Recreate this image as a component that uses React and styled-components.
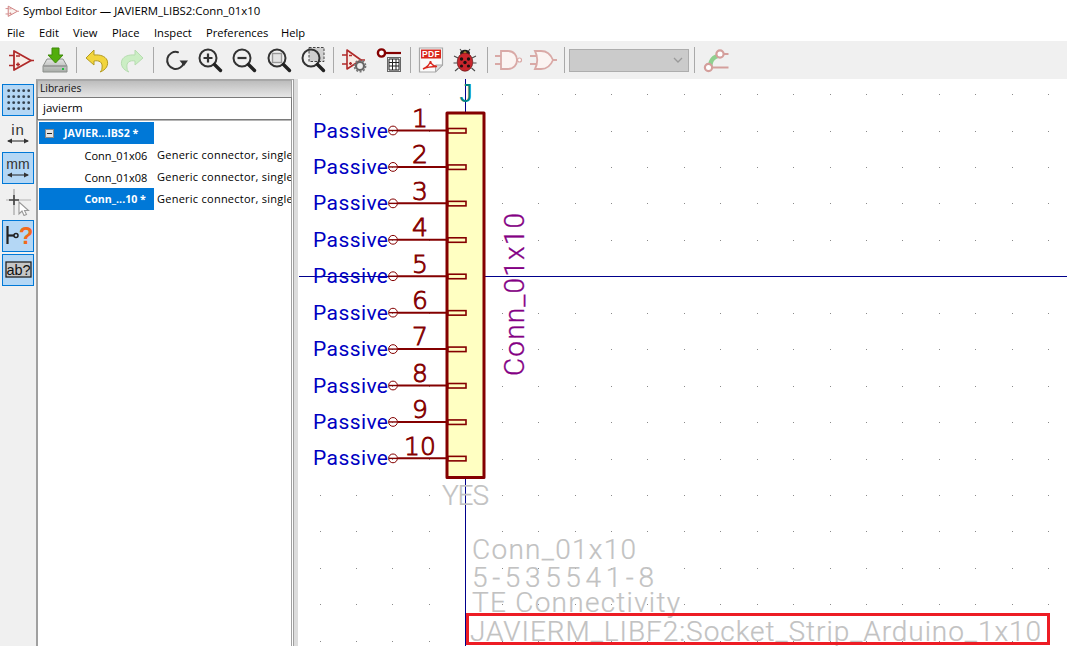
import React from 'react';
import styled, { createGlobalStyle } from 'styled-components';

const Global = createGlobalStyle`
  html, body { margin: 0; padding: 0; background: #fff; overflow: hidden; }
  #root { width: 1067px; height: 646px; }
`;
const UI = `"Open Sans", "Noto Sans", sans-serif`;

const Page = styled.div`display:flex;flex-direction:column;width:1067px;height:646px;overflow:hidden;background:#fff;font-family:${UI};color:#000;`;
const TitleBar = styled.div`display:flex;align-items:center;gap:4px;height:22px;padding:0 0 1px 5px;box-sizing:border-box;font-size:11.4px;background:#fff;`;
const MenuBar = styled.div`display:flex;align-items:center;height:19px;padding:1px 0 0 7px;box-sizing:border-box;font-size:11.2px;background:#fff;`;
const MenuItem = styled.span`width:${p => p.$w}px;`;
const Toolbar = styled.div`display:flex;align-items:center;height:38px;padding-left:4px;background:#f0f0f0;`;
const Slot = styled.div`display:flex;align-items:center;justify-content:center;width:34.3px;height:26px;flex:none;`;
const Sep = styled.div`width:${p => p.$w}px;flex:none;display:flex;justify-content:center;&::before{content:"";width:1px;height:26px;background:#a9a9a9;}`;
const Select = styled.div`display:flex;align-items:center;justify-content:flex-end;width:120px;height:23px;box-sizing:border-box;border:1px solid #adadad;background:#cbcbcb;padding-right:4px;flex:none;`;
const Body = styled.div`display:flex;flex:1;min-height:0;`;
const Rail = styled.div`display:flex;flex-direction:column;gap:2px;width:36px;flex:none;box-sizing:border-box;padding:5px 2px 0;background:#f0f0f0;`;
const RailButton = styled.div`display:flex;align-items:center;justify-content:center;width:32px;height:32px;box-sizing:border-box;border:1px solid ${p => p.$on ? '#0078d7' : 'transparent'};background:${p => p.$on ? '#b4d7f5' : 'transparent'};`;
const Panel = styled.div`display:flex;flex-direction:column;width:258px;flex:none;box-sizing:border-box;border-left:2px solid #a0a0a0;border-top:2px solid #a8a8a8;border-right:3px double #a0a0a0;background:#fff;`;
const PanelHead = styled.div`height:16px;line-height:14px;padding-left:2px;font-size:10.2px;background:linear-gradient(#bdbdbd,#e6e6e6);color:#111;`;
const Search = styled.div`height:23px;box-sizing:border-box;border:1px solid #7a7a7a;margin:0 -1px;padding-left:5px;line-height:20px;font-size:11.5px;background:#fff;`;
const Tree = styled.div`flex:1;border-top:1px solid #b5b5b5;padding:1px 0 0 1px;`;
const Row = styled.div`display:grid;grid-template-columns:115px 1fr;height:22px;line-height:21px;font-size:11px;white-space:nowrap;`;
const Name = styled.div`display:flex;align-items:center;padding-left:${p => p.$lib ? 6 : 45.5}px;gap:10px;overflow:hidden;background:${p => p.$on ? '#0078d7' : 'transparent'};color:${p => p.$on ? '#fff' : '#000'};font-weight:${p => p.$on ? 700 : 400};font-size:${p => p.$on ? 10.6 : 11}px;`;
const Desc = styled.div`padding-left:3px;overflow:hidden;letter-spacing:.25px;`;
const Minus = styled.span`display:flex;align-items:center;justify-content:center;width:9px;height:9px;box-sizing:border-box;background:#e4e4e4;border:1px solid #8a8a8a;flex:none;&::before{content:"";width:5px;height:1px;background:#222;}`;
const Sash = styled.div`width:4px;flex:none;background:#dcdcdc;`;
const Canvas = styled.svg`flex:1;display:block;width:769px;height:567px;background:#fff;`;

const PinName = styled.text`font-family:Roboto,sans-serif;font-size:21px;fill:#0000c2;`;
const PinNum = styled.text`font-family:"DejaVu Sans",sans-serif;font-weight:200;font-size:25px;fill:#840000;stroke:#840000;stroke-width:.9px;text-anchor:middle;`;
const Ghost = styled.text`font-family:Roboto,sans-serif;font-weight:300;font-size:28px;fill:#c2c2c2;stroke:#c2c2c2;stroke-width:.2px;`;
const Value = styled.text`font-family:Roboto,sans-serif;font-weight:300;font-size:28px;fill:#840084;stroke:#840084;stroke-width:.3px;`;
const RefDes = styled.text`font-family:"Liberation Sans",sans-serif;font-size:26px;fill:#008484;`;
const RailText = styled.text`font-family:"Liberation Sans",sans-serif;font-size:${p => p.$s || 14}px;font-weight:${p => p.$b ? 700 : 400};letter-spacing:${p => p.$ls || 0}px;fill:${p => p.$c || '#333'};text-anchor:middle;`;
const PdfText = styled.text`font-family:"Liberation Sans",sans-serif;font-weight:700;font-size:8.5px;fill:#fff;text-anchor:middle;letter-spacing:.3px;`;

const Ico = ({ w = 26, h = 26, children }) => <svg width={w} height={h} viewBox={`0 0 ${w} ${h}`}>{children}</svg>;

const Amp = ({ size = 26, faded }) => (
  <svg width={size} height={size} viewBox="0 0 26 26" opacity={faded ? 0.6 : 1}>
    <path d="M6 4V23L23 13.5Z" fill="#f8ece6" stroke="#b02a2a" strokeWidth="1.8" strokeLinejoin="round" />
    <path d="M1 8.5H6M1 18.5H6M23 13.5H26" stroke="#b02a2a" strokeWidth="1.6" />
    <path d="M8 9H12" stroke="#b02a2a" strokeWidth="1.5" />
    <path d="M8 17.5H12M10 15.5V19.5" stroke="#b02a2a" strokeWidth="1.5" />
  </svg>
);
const Drive = () => (
  <Ico w={28}>
    <defs>
      <linearGradient id="dg" x1="0" y1="0" x2="0" y2="1"><stop offset="0" stopColor="#e4e4e4" /><stop offset="1" stopColor="#a8aca8" /></linearGradient>
    </defs>
    <path d="M6 12H22L26 19V25H2V19Z" fill="url(#dg)" stroke="#8c908c" strokeWidth="1" />
    <path d="M2.5 19H25.5" stroke="#777" strokeWidth="1" />
    <rect x="21" y="21" width="2" height="2" fill="#22c042" />
    <path d="M11 1H18V8H22L14.5 16L7 8H11Z" fill="#52ad0c" stroke="#3f8a0a" strokeWidth="1" />
  </Ico>
);
const Arrow = ({ fill, stroke, flip, op = 1 }) => (
  <Ico>
    <g transform={flip ? 'translate(26,0) scale(-1,1)' : undefined} opacity={op}>
      <path d="M10 3L2 11L10 18V14C15 13 19 15 18 21C18 23 17 24 16 25C22 23 25 18 23 13C21 9 16 7.5 10 8Z" fill={fill} stroke={stroke} strokeWidth="1" strokeLinejoin="round" />
    </g>
  </Ico>
);
const Refresh = () => (
  <Ico>
    <path d="M21 15A8.5 8.5 0 1 1 15 5.2" fill="none" stroke="#333" strokeWidth="2" strokeLinecap="round" />
    <path d="M16.5 13.5H25L21 19Z" fill="#333" />
  </Ico>
);
const Lens = ({ children }) => (
  <Ico>
    {children}
    <circle cx="11" cy="11" r="8.5" fill="none" stroke="#333" strokeWidth="2" />
    <path d="M17.5 17.5L23.5 23.5" stroke="#222" strokeWidth="3.4" strokeLinecap="round" />
  </Ico>
);
const Gear = ({ x, y }) => (
  <g transform={`translate(${x} ${y})`}>
    <circle r="4" fill="#eee" stroke="#666" strokeWidth="2.2" />
    <circle r="5.6" fill="none" stroke="#777" strokeWidth="1.6" strokeDasharray="2 1.5" />
  </g>
);
const AmpGear = () => (
  <Ico>
    <path d="M5 3V22L19 13Z" fill="#f8ece6" stroke="#b02a2a" strokeWidth="1.6" strokeLinejoin="round" />
    <path d="M0 8H5M0 17H5M19 13H23" stroke="#b02a2a" strokeWidth="1.5" />
    <path d="M7 8.5H10M7 16.5H10M8.5 15V18" stroke="#b02a2a" strokeWidth="1.3" />
    <Gear x={18} y={19} />
  </Ico>
);
const PinTable = () => (
  <Ico>
    <circle cx="5.5" cy="6" r="3.6" fill="#fff" stroke="#840000" strokeWidth="2.4" />
    <path d="M9 6H25" stroke="#840000" strokeWidth="2.2" />
    <rect x="11.5" y="10.5" width="13" height="14" fill="#e8e8e8" stroke="#666" />
    <path d="M13 12H23V23H13Z" fill="#fff" stroke="#222" />
    <path d="M13 15.5H23M13 19H23M16.5 12V23M20 12V23" stroke="#222" strokeWidth="1" />
  </Ico>
);
const Pdf = () => (
  <Ico>
    <path d="M1.5 1H24.5V18L17.5 25H1.5Z" fill="#fafafa" stroke="#a8a8a8" strokeWidth="1.2" />
    <path d="M24.5 18H17.5V25Z" fill="#dcdcdc" stroke="#a8a8a8" />
    <rect x="3" y="2.5" width="20" height="9" fill="#d9261c" />
    <PdfText x="13" y="10.2">PDF</PdfText>
    <path d="M5 22C9 20 12 17 12.5 14C13 17 15 19 19 19.5C15 19.5 9 20 5 22Z" fill="none" stroke="#d9261c" strokeWidth="1.5" />
  </Ico>
);
const Bug = () => (
  <Ico>
    <path d="M8 2L10.5 5.5M18 2L15.5 5.5M6 11L2 9M20 11L24 9M5 16H1.5M21 16H24.5M6.5 21L3 24M19.5 21L23 24" stroke="#4a4a4a" strokeWidth="1.1" />
    <ellipse cx="13" cy="6" rx="5" ry="3.2" fill="#1c1c1c" />
    <ellipse cx="13" cy="5.5" rx="1.5" ry="1" fill="#e8cf30" />
    <ellipse cx="13" cy="15" rx="7.8" ry="9.2" fill="#c9252c" stroke="#5a1414" strokeWidth=".7" />
    <circle cx="9.5" cy="12" r="1.7" fill="#1e1010" />
    <circle cx="16.5" cy="12" r="1.7" fill="#1e1010" />
    <circle cx="13" cy="15.5" r="1.7" fill="#1e1010" />
    <circle cx="9.5" cy="19" r="1.6" fill="#1e1010" />
    <circle cx="16.5" cy="19" r="1.6" fill="#1e1010" />
  </Ico>
);
const AndGate = () => (
  <Ico w={28}>
    <path d="M6 4H13C19 4 22 8.5 22 13S19 22 13 22H6Z" fill="#fbf4f2" stroke="#d9a9a6" strokeWidth="1.8" />
    <path d="M0 9H6M0 17H6" stroke="#d9a9a6" strokeWidth="1.8" />
    <circle cx="24.5" cy="13" r="2" fill="#fff" stroke="#d9a9a6" strokeWidth="1.2" />
  </Ico>
);
const OrGate = () => (
  <Ico w={28}>
    <path d="M6 4H12C18 4 22 8 24 13C22 18 18 22 12 22H6C9 16 9 10 6 4Z" fill="#fbf4f2" stroke="#d9a9a6" strokeWidth="1.8" />
    <path d="M1 9H8M1 17H8M24 13H28" stroke="#d9a9a6" strokeWidth="1.8" />
  </Ico>
);
const NetIcon = () => (
  <Ico>
    <path d="M5 18C6 11 10 8 14 7L15.5 11C12 12 10 14 9.5 19Z" fill="#8fd08f" />
    <circle cx="17" cy="7" r="3.6" fill="#fff" stroke="#d49f9c" strokeWidth="2.2" />
    <circle cx="5.5" cy="20.5" r="3.6" fill="#fff" stroke="#d49f9c" strokeWidth="2.2" />
    <path d="M20.5 7H25.5M9 20.5H25.5" stroke="#d49f9c" strokeWidth="2.2" />
  </Ico>
);

const RailDots = () => (
  <Ico w={24} h={24}>
    {[2.7, 8.7, 14.7, 20.7].flatMap(y => [2.7, 7.7, 12.7, 17.7, 22.7].map(x => <circle key={`${x}-${y}`} cx={x} cy={y} r="1.4" fill="#34424f" />))}
  </Ico>
);
const Unit = ({ t, s, ls }) => (
  <Ico w={26} h={26}>
    <RailText x="13" y="14" $s={s} $ls={ls}>{t}</RailText>
    <path d="M3 20H23" stroke="#333" strokeWidth="1.1" />
    <path d="M2 20L7 17.5V22.5ZM24 20L19 17.5V22.5Z" fill="#333" />
  </Ico>
);
const Cursor = () => (
  <Ico w={28} h={28}>
    <path d="M10 1V27" stroke="#bdbdbd" strokeWidth="1.8" />
    <path d="M2 12H27" stroke="#bdbdbd" strokeWidth="1.2" />
    <path d="M5 12H15M10 7V17" stroke="#444" strokeWidth="1.6" />
    <path d="M15 14V26L18 23L20 27.5L22.5 26.5L20.5 22.5H24.5Z" fill="#fff" stroke="#999" strokeWidth="1.1" />
  </Ico>
);
const PinQ = () => (
  <Ico w={28} h={28}>
    <path d="M3.5 4V22" stroke="#222" strokeWidth="2.2" />
    <path d="M3.5 13.5H10" stroke="#222" strokeWidth="2.2" />
    <circle cx="12" cy="13.5" r="2" fill="none" stroke="#222" strokeWidth="1.5" />
    <RailText x="22" y="22" $s={24} $b $c="#f26a1b">?</RailText>
  </Ico>
);
const AbQ = () => (
  <Ico w={28} h={28}>
    <rect x="2" y="6" width="25" height="15" fill="#c6c6c6" stroke="#222" strokeWidth="1.3" />
    <RailText x="14.5" y="18.5" $s={14.5} $c="#111">ab?</RailText>
  </Ico>
);

const step = 36.43;
const PINS = Array.from({ length: 10 }, (_, i) => ({ n: i + 1, y: 130.5 + step * i }));
const dots = [];
for (let y = 94.2; y < 646; y += step) {
  for (let x = 319.6; x < 1067; x += step) dots.push([x, y]);
}

const rows = [
  { name: 'Conn_01x06' },
  { name: 'Conn_01x08' },
  { name: 'Conn_...10 *', on: true },
];
const DESC = 'Generic connector, single row, 01x10';

export default function App() {
  return (
    <Page>
      <Global />
      <TitleBar><Amp size={14} faded />Symbol Editor — JAVIERM_LIBS2:Conn_01x10</TitleBar>
      <MenuBar>
        <MenuItem $w={32}>File</MenuItem>
        <MenuItem $w={34}>Edit</MenuItem>
        <MenuItem $w={39}>View</MenuItem>
        <MenuItem $w={42}>Place</MenuItem>
        <MenuItem $w={52}>Inspect</MenuItem>
        <MenuItem $w={75}>Preferences</MenuItem>
        <MenuItem $w={40}>Help</MenuItem>
      </MenuBar>
      <Toolbar>
        <Slot><Amp /></Slot>
        <Slot><Drive /></Slot>
        <Sep $w={7.5} />
        <Slot><Arrow fill="#f2d53c" stroke="#b39b22" /></Slot>
        <Slot><Arrow fill="#cbeec4" stroke="#b6dcb0" flip /></Slot>
        <Sep $w={10} />
        <Slot><Refresh /></Slot>
        <Slot><Lens><path d="M6.5 11H15.5M11 6.5V15.5" stroke="#333" strokeWidth="2.2" /></Lens></Slot>
        <Slot><Lens><path d="M6.5 11H15.5" stroke="#333" strokeWidth="2.2" /></Lens></Slot>
        <Slot><Lens><rect x="6.5" y="6.5" width="9" height="9" fill="#e4e4e4" stroke="#999" strokeWidth="1.4" /></Lens></Slot>
        <Slot><Lens><rect x="9" y="0.5" width="15" height="14" fill="#cfcfcf" stroke="#444" strokeDasharray="2.5 1.5" /></Lens></Slot>
        <Sep $w={7.6} />
        <Slot><AmpGear /></Slot>
        <Slot><PinTable /></Slot>
        <Sep $w={7.6} />
        <Slot><Pdf /></Slot>
        <Slot><Bug /></Slot>
        <Sep $w={9} />
        <Slot><AndGate /></Slot>
        <Slot><OrGate /></Slot>
        <Sep $w={9} />
        <Select><svg width="12" height="8" viewBox="0 0 12 8"><path d="M2 2L6 6L10 2" fill="none" stroke="#9a9a9a" strokeWidth="1.3" /></svg></Select>
        <Sep $w={10} />
        <Slot><NetIcon /></Slot>
      </Toolbar>
      <Body>
        <Rail>
          <RailButton $on><RailDots /></RailButton>
          <RailButton><Unit t="in" s={15} ls={1} /></RailButton>
          <RailButton $on><Unit t="mm" s={14} /></RailButton>
          <RailButton><Cursor /></RailButton>
          <RailButton $on><PinQ /></RailButton>
          <RailButton $on><AbQ /></RailButton>
        </Rail>
        <Panel>
          <PanelHead>Libraries</PanelHead>
          <Search>javierm</Search>
          <Tree>
            <Row><Name $on $lib><Minus />JAVIER...IBS2 *</Name><Desc /></Row>
            {rows.map(r => (
              <Row key={r.name}><Name $on={r.on}>{r.name}</Name><Desc>{DESC}</Desc></Row>
            ))}
          </Tree>
        </Panel>
        <Sash />
        <Canvas viewBox="298 79 769 567">
          {dots.map(([x, y]) => <rect key={`${x}-${y}`} x={Math.round(x)} y={Math.round(y)} width="1" height="1" fill="#8a8a8a" />)}
          <path d="M465.5 79V646M299 276.5H1067" stroke="#00008b" strokeWidth="1" shapeRendering="crispEdges" />
          <RefDes x="459.5" y="102">J</RefDes>
          <rect x="447" y="113" width="37" height="364.5" fill="#ffffc2" stroke="#840000" strokeWidth="3" strokeLinejoin="round" />
          {PINS.map(({ n, y }) => (
            <g key={n}>
              <path d={`M398 ${y}H447`} stroke="#840000" strokeWidth="2" />
              <circle cx="393" cy={y} r="4.4" fill="none" stroke="#840000" strokeWidth="1" />
              <path d={`M389 ${y}H398`} stroke="#840000" strokeWidth="1.4" />
              <rect x="448" y={y - 2} width="18" height="4.5" fill="#ffffc2" stroke="#840000" strokeWidth="1.6" />
              <PinName x="313" y={y + 7} textLength="75">Passive</PinName>
              <PinNum x="420" y={y - 3.6}>{n}</PinNum>
            </g>
          ))}
          <Value x="0" y="0" transform="translate(524 376) rotate(-90)" textLength="163">Conn_01x10</Value>
          <Ghost x="442" y="505" textLength="47">YES</Ghost>
          <Ghost x="472" y="559" textLength="164">Conn_01x10</Ghost>
          <Ghost x="472" y="587" textLength="182">5-535541-8</Ghost>
          <Ghost x="472" y="612" textLength="208">TE Connectivity</Ghost>
          <Ghost x="470" y="641" textLength="571">JAVIERM_LIBF2:Socket_Strip_Arduino_1x10</Ghost>
          <rect x="467.5" y="614.5" width="581" height="29" fill="none" stroke="#ed1c24" strokeWidth="3" />
        </Canvas>
      </Body>
    </Page>
  );
}
